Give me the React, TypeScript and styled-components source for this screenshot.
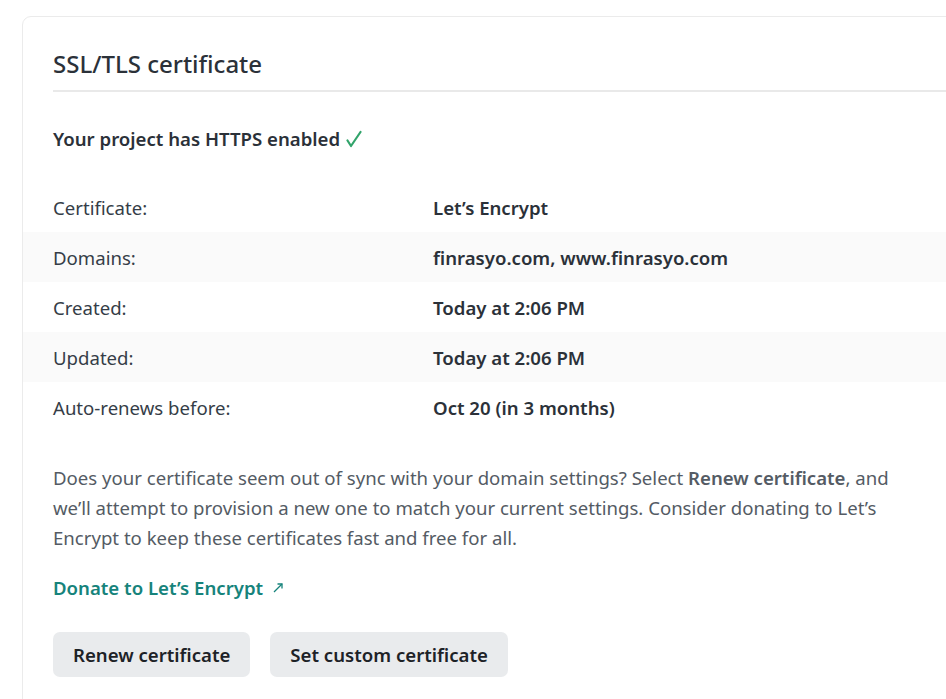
import styled, { createGlobalStyle } from "styled-components";

const GlobalStyle = createGlobalStyle`
  html, body {
    margin: 0;
    padding: 0;
    background: #ffffff;
  }
  body {
    font-family: "Noto Sans", "Open Sans", sans-serif;
    color: #2e3741;
    overflow: hidden;
  }
`;

const Page = styled.div`
  padding: 16px 0 0 22px;
  width: 946px;
  height: 699px;
  box-sizing: border-box;
`;

const Card = styled.section`
  width: 960px;
  border: 1px solid #ebebeb;
  border-radius: 9px;
  background: #ffffff;
  padding-bottom: 40px;
`;

const Header = styled.header`
  margin: 0 0 0 30px;
  padding: 32px 0 11px;
  border-bottom: 2px solid #e9e9e9;
`;

const Title = styled.h2`
  margin: 0;
  font-size: 24px;
  line-height: 30px;
  font-weight: 500;
  color: #2b3139;
`;

const Status = styled.p`
  display: flex;
  align-items: center;
  gap: 6px;
  margin: 0;
  padding: 34px 30px 30px;
  font-size: 18.6px;
  line-height: 26px;
  font-weight: 600;
  color: #2b3139;
`;

const CheckMark = () => (
  <svg width="16" height="18" viewBox="0 0 16 18" fill="none" stroke="#32a46b" strokeWidth="2.2" strokeLinecap="round" strokeLinejoin="round">
    <path d="M1.5 10.5 L5 16 L14.5 2" />
  </svg>
);

const Details = styled.dl`
  margin: 0;
`;

const Row = styled.div<{ $striped: boolean }>`
  display: grid;
  grid-template-columns: 380px 1fr;
  align-items: center;
  height: 50px;
  padding: 0 30px;
  background: ${(p) => (p.$striped ? "#fafafa" : "transparent")};
`;

const Label = styled.dt`
  font-size: 18.6px;
  color: #353d47;
`;

const Value = styled.dd`
  margin: 0;
  font-size: 18.6px;
  font-weight: 600;
  color: #2b3139;
`;

const Body = styled.div`
  padding: 31px 30px 0;
  width: 900px;
  box-sizing: border-box;
`;

const Paragraph = styled.p`
  margin: 0;
  width: 860px;
  font-size: 18.6px;
  line-height: 30px;
  color: #545b64;

  strong {
    font-weight: 600;
  }
`;

const DonateLink = styled.a`
  display: inline-flex;
  align-items: center;
  gap: 9px;
  margin-top: 20px;
  font-size: 18.6px;
  line-height: 30px;
  font-weight: 600;
  color: #16837b;
  text-decoration: none;
`;

const Actions = styled.div`
  display: flex;
  gap: 20px;
  margin-top: 29px;
`;

const Button = styled.button`
  height: 45px;
  padding: 0 20px;
  border: none;
  border-radius: 7px;
  background: #e9ebed;
  font-family: inherit;
  font-size: 18.6px;
  font-weight: 600;
  color: #1d2227;
  cursor: pointer;
`;

const rows: [string, string][] = [
  ["Certificate:", "Let\u2019s Encrypt"],
  ["Domains:", "finrasyo.com, www.finrasyo.com"],
  ["Created:", "Today at 2:06 PM"],
  ["Updated:", "Today at 2:06 PM"],
  ["Auto-renews before:", "Oct 20 (in 3 months)"],
];

const ExternalArrow = () => (
  <svg width="12" height="12" viewBox="0 0 12 12" fill="none" stroke="currentColor" strokeWidth="1.3">
    <path d="M2 10 L10 2" />
    <path d="M5.5 2 H10 V6.5" />
  </svg>
);

export default function App() {
  return (
    <Page>
      <GlobalStyle />
      <Card>
        <Header>
          <Title>SSL/TLS certificate</Title>
        </Header>
        <Status>
          Your project has HTTPS enabled
          <CheckMark />
        </Status>
        <Details>
          {rows.map(([label, value], i) => (
            <Row key={label} $striped={i % 2 === 1}>
              <Label>{label}</Label>
              <Value>{value}</Value>
            </Row>
          ))}
        </Details>
        <Body>
          <Paragraph>
            Does your certificate seem out of sync with your domain settings? Select{" "}
            <strong>Renew certificate</strong>, and we’ll attempt to provision a new one to match
            your current settings. Consider donating to Let’s Encrypt to keep these certificates
            fast and free for all.
          </Paragraph>
          <DonateLink href="#">
            Donate to Let’s Encrypt <ExternalArrow />
          </DonateLink>
          <Actions>
            <Button>Renew certificate</Button>
            <Button>Set custom certificate</Button>
          </Actions>
        </Body>
      </Card>
    </Page>
  );
}
